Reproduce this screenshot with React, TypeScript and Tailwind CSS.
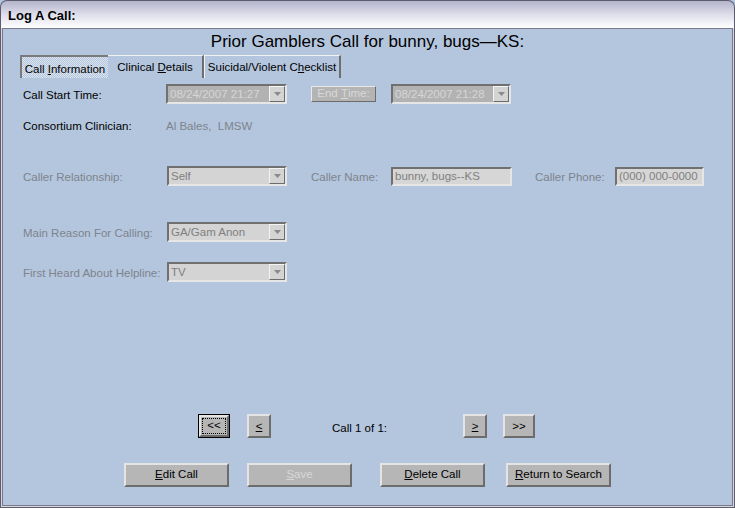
import React from 'react';

const font = { fontFamily: '"Liberation Sans", Arial, sans-serif' };

const Arrow: React.FC = () => (
  <div className="w-[16px] h-[16px] bg-[#d4d4d4] border border-t-[#f4f4f4] border-l-[#f4f4f4] border-b-[#6c6c6c] border-r-[#6c6c6c] flex items-center justify-center">
    <svg width="7" height="4" viewBox="0 0 7 4">
      <path d="M0 0h7L3.5 4z" fill="#8a8a8a" />
    </svg>
  </div>
);

const Combo: React.FC<{ value: string; w: string; dark?: boolean }> = ({ value, w, dark }) => (
  <div
    className={`${w} h-[20px] flex items-center justify-between border-2 border-t-[#707070] border-l-[#707070] border-b-[#e6e6e6] border-r-[#e6e6e6] ${
      dark ? 'bg-[#b2b2b2] text-[#d6d6d6]' : 'bg-[#d4d4d4] text-[#808080]'
    }`}
  >
    <span className="pl-[2px] pt-[1px] text-[11.5px] leading-none">{value}</span>
    <Arrow />
  </div>
);

const TextBox: React.FC<{ value: string; w: string }> = ({ value, w }) => (
  <div className={`${w} h-[19px] flex items-center bg-[#d6d6d6] text-[#808080] border-2 border-t-[#707070] border-l-[#707070] border-b-[#e6e6e6] border-r-[#e6e6e6]`}>
    <span className="pl-[2px] pt-[1px] text-[11.5px] leading-none">{value}</span>
  </div>
);

const Btn: React.FC<{ w: string; children: React.ReactNode; disabled?: boolean; focused?: boolean }> = ({
  w,
  children,
  disabled,
  focused,
}) => (
  <div
    className={`${w} h-[24px] flex items-center justify-center bg-[#b6b6b6] text-[11.5px] ${
      disabled ? 'text-[#d8d8d8]' : 'text-black'
    } ${
      focused
        ? 'border border-black'
        : 'border-2 border-t-[#e4e4e4] border-l-[#e4e4e4] border-b-[#6c6c6c] border-r-[#6c6c6c] pt-[1px]'
    }`}
  >
    {focused ? (
      <div className="w-full h-full border-2 border-t-[#e4e4e4] border-l-[#e4e4e4] border-b-[#6c6c6c] border-r-[#6c6c6c] p-[1px]">
        <div className="w-full h-full border border-dotted border-black flex items-center justify-center">
          {children}
        </div>
      </div>
    ) : (
      children
    )}
  </div>
);

const Label: React.FC<{ w: string; children: React.ReactNode; dim?: boolean }> = ({ w, children, dim }) => (
  <div className={`${w} pt-[3px] text-[11.5px] ${dim ? 'text-[#7e838c]' : 'text-black'}`}>{children}</div>
);

export default function App() {
  return (
    <div style={font} className="w-[735px] h-[508px] flex flex-col bg-[#b4c6de] overflow-hidden">
      {/* title bar */}
      <div className="h-[28px] shrink-0 rounded-t-[7px] border border-b-0 border-[#5c5c6e] bg-linear-to-b from-[#b4b4cc] via-[#dedeea] to-white flex items-center pl-[7px] pt-[3px]">
        <span className="text-[13px] font-bold text-black">Log A Call:</span>
      </div>

      {/* window body */}
      <div className="flex-1 border border-t-0 border-[#5c5c6e] bg-[#d8d8e0] pl-[1px] pr-[1px] pb-[1px]">
        <div className="h-full border border-[#7a7a8e] bg-[#b4c6de] flex flex-col">
          <div className="h-[20px] mt-[3px] flex items-center justify-center text-[17px] text-black">
            Prior Gamblers Call for bunny, bugs—KS:
          </div>

          {/* tabs */}
          <div className="mt-[3px] h-[23px] flex pl-[17px] text-[11.5px]">
            <div className="w-[88px] border-t-2 border-l-2 border-[#7a7a7a] bg-[repeating-conic-gradient(#b4c6de_0_25%,#dbe3ee_0_50%)] bg-[length:2px_2px] flex items-center justify-center pt-[4px]">
              Call&nbsp;<span className="underline">I</span>nformation
            </div>
            <div className="w-[96px] border-t border-[#f2f2f2] border-r-2 border-r-[#6e6e6e] flex items-center justify-center pt-[1px]">
              Clinical&nbsp;<span className="underline">D</span>etails
            </div>
            <div className="w-[137px] border-t border-l border-[#f2f2f2] border-r-2 border-r-[#6e6e6e] flex items-center justify-center pt-[1px]">
              Suicidal/Violent C<span className="underline">h</span>ecklist
            </div>
          </div>

          {/* call start time */}
          <div className="mt-[6px] h-[20px] flex items-center pl-[20px]">
            <Label w="w-[143px]">Call Start Time:</Label>
            <Combo w="w-[121px]" value="08/24/2007 21:27" dark />
            <div className="ml-[24px] w-[65px] h-[16px] bg-[#b4b4b4] border border-t-[#e8e8e8] border-l-[#e8e8e8] border-b-[#6c6c6c] border-r-[#6c6c6c] flex items-center justify-center text-[11.5px] text-[#d8d8d8]">
              End&nbsp;<span className="underline">T</span>ime:
            </div>
            <div className="ml-[15px]">
              <Combo w="w-[120px]" value="08/24/2007 21:28" dark />
            </div>
          </div>

          {/* clinician */}
          <div className="mt-[11px] h-[20px] flex items-center pl-[20px]">
            <Label w="w-[143px]">Consortium Clinician:</Label>
            <span className="pt-[3px] text-[11.5px] text-[#7e838c] whitespace-pre">Al Bales,  LMSW</span>
          </div>

          {/* caller relationship */}
          <div className="mt-[31px] h-[20px] flex items-center pl-[20px]">
            <Label w="w-[144px]" dim>Caller Relationship:</Label>
            <Combo w="w-[120px]" value="Self" />
            <Label w="ml-[24px] w-[80px]" dim>Caller Name:</Label>
            <TextBox w="w-[121px]" value="bunny, bugs--KS" />
            <Label w="ml-[23px] w-[80px]" dim>Caller Phone:</Label>
            <TextBox w="w-[89px]" value="(000) 000-0000" />
          </div>

          {/* main reason */}
          <div className="mt-[36px] h-[20px] flex items-center pl-[20px]">
            <Label w="w-[144px]" dim>Main Reason For Calling:</Label>
            <Combo w="w-[120px]" value="GA/Gam Anon" />
          </div>

          {/* first heard */}
          <div className="mt-[20px] h-[20px] flex items-center pl-[20px]">
            <Label w="w-[144px]" dim>First Heard About Helpline:</Label>
            <Combo w="w-[120px]" value="TV" />
          </div>

          {/* navigation */}
          <div className="mt-[132px] h-[24px] flex items-center pl-[195px]">
            <Btn w="w-[32px]" focused>&lt;&lt;</Btn>
            <div className="ml-[17px]">
              <Btn w="w-[24px]">
                <span className="underline">&lt;</span>
              </Btn>
            </div>
            <div className="w-[192px] pl-[61px] pt-[5px] text-[11.5px] text-black">Call 1 of 1:</div>
            <Btn w="w-[24px]">
              <span className="underline">&gt;</span>
            </Btn>
            <div className="ml-[16px]">
              <Btn w="w-[32px]">&gt;&gt;</Btn>
            </div>
          </div>

          {/* actions */}
          <div className="mt-[24px] h-[25px] flex items-center pl-[121px]">
            <Btn w="w-[105px]">
              <span><span className="underline">E</span>dit Call</span>
            </Btn>
            <div className="ml-[18px]">
              <Btn w="w-[105px]" disabled>
                <span><span className="underline">S</span>ave</span>
              </Btn>
            </div>
            <div className="ml-[28px]">
              <Btn w="w-[105px]">
                <span><span className="underline">D</span>elete Call</span>
              </Btn>
            </div>
            <div className="ml-[21px]">
              <Btn w="w-[105px]">
                <span><span className="underline">R</span>eturn to Search</span>
              </Btn>
            </div>
          </div>
        </div>
      </div>
    </div>
  );
}
